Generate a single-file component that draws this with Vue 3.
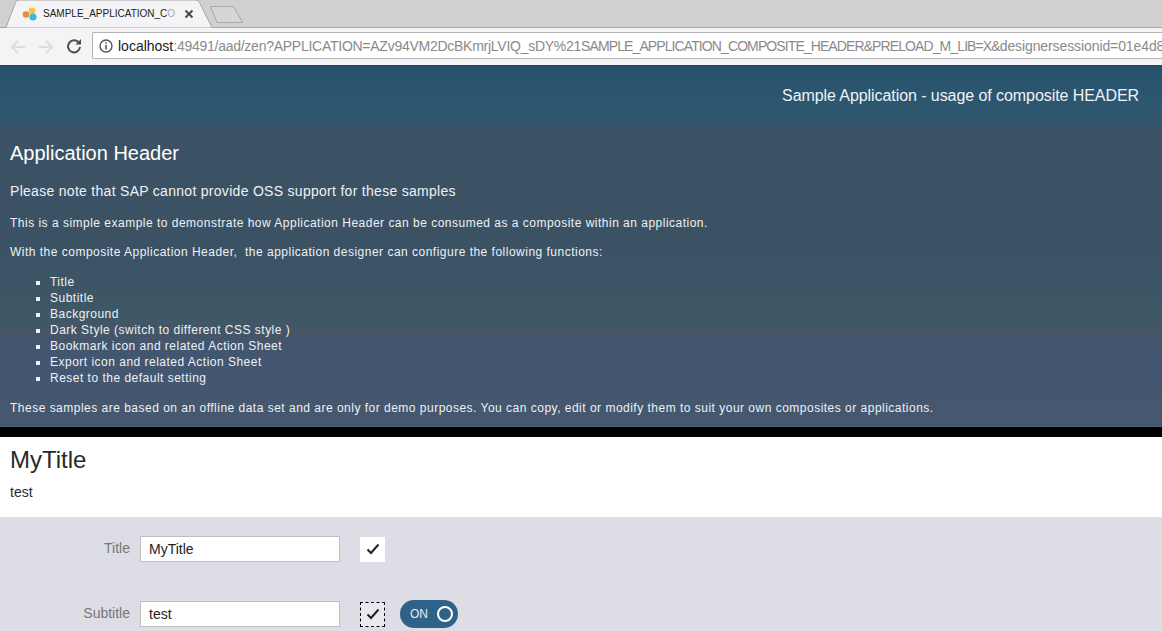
<template>
  <div class="page">
    <div class="tabstrip">
      <div class="tab">
        <svg class="tab-shape" width="226" height="28" viewBox="0 0 226 28"><path d="M0 27.5 H6 L15.5 2.5 Q16.5 0 19 0 H196 Q198.500 0 199.500 2.5 L212 27.5 H226" fill="#f4f3f5" stroke="#a4a5a5" stroke-width="1"/></svg>
        <svg class="favicon" width="16" height="16" viewBox="0 0 16 16"><circle cx="10" cy="4.700" r="3.300" fill="#f5c243"/><circle cx="4" cy="8.500" r="3.300" fill="#ef8a38"/><circle cx="11" cy="11" r="3.600" fill="#35bcd8"/></svg>
        <span class="tab-title">SAMPLE_APPLICATION_C<span class="fade">O</span></span>
        <svg class="tab-close" width="10" height="10" viewBox="0 0 10 10"><path d="M1.500 1.500 L8.500 8.500 M8.500 1.500 L1.500 8.500" stroke="#4a4a4a" stroke-width="2"/></svg>
      </div>
      <svg class="newtab" width="36" height="20" viewBox="0 0 36 20"><path d="M1.500 1.500 H24.500 L33.500 17.500 H8 Z" fill="#d6d7d5" stroke="#a6a7a6"/></svg>
    </div>
    <div class="toolbar">
      <svg class="nav" width="16" height="14" viewBox="0 0 16 14"><path d="M15 7 H2 M8 1 L2 7 L8 13" fill="none" stroke="#dddddf" stroke-width="2"/></svg>
      <svg class="nav" width="16" height="14" viewBox="0 0 16 14"><path d="M1 7 H14 M8 1 L14 7 L8 13" fill="none" stroke="#dddddf" stroke-width="2"/></svg>
      <svg class="reload" width="16" height="16" viewBox="0 0 16 16"><path d="M13 5 A6 6 0 1 0 14 9" fill="none" stroke="#4e4e4e" stroke-width="2"/><path d="M9.500 6.500 H15 V1 Z" fill="#4e4e4e"/></svg>
      <div class="omnibox">
        <svg width="14" height="14" viewBox="0 0 14 14" class="info"><circle cx="7" cy="7" r="6" fill="none" stroke="#555" stroke-width="1.400"/><path d="M7 6 V10.500 M7 3.200 V4.800" stroke="#555" stroke-width="1.600"/></svg>
        <span class="url"><span class="host">localhost</span><span class="seg-a">:49491/aad/zen?APPLICATION=AZv94VM2DcBKmrjLVIQ_sDY%21</span><span class="seg-b">SAMPLE_APPLICATION_COMPOSITE_HEADER&amp;PRELOAD_M_LIB=X&amp;</span><span class="seg-c">designersessionid=01e4d8</span></span>
      </div>
    </div>
    <header class="shell-head">Sample Application - usage of composite HEADER</header>
    <section class="intro">
      <h1>Application Header</h1>
      <p class="note">Please note that SAP cannot provide OSS support for these samples</p>
      <p class="body first">This is a simple example to demonstrate how Application Header can be consumed as a composite within an application.</p>
      <p class="body second">With the composite Application Header,&nbsp; the application designer can configure the following functions:</p>
      <ul>
        <li v-for="item in items" :key="item">{{ item }}</li>
      </ul>
      <p class="body last">These samples are based on an offline data set and are only for demo purposes. You can copy, edit or modify them to suit your own composites or applications.</p>
    </section>
    <div class="blackbar"></div>
    <section class="app-head">
      <div class="app-title">MyTitle</div>
      <div class="app-sub">test</div>
    </section>
    <section class="form">
      <div class="row">
        <label>Title</label>
        <div class="input">MyTitle</div>
        <div class="check"><svg width="14" height="12" viewBox="0 0 14 12"><path d="M1.500 6.500 L5 10 L12.500 1.500" fill="none" stroke="#222" stroke-width="2"/></svg></div>
      </div>
      <div class="row second-row">
        <label>Subtitle</label>
        <div class="input">test</div>
        <div class="check focus"><svg width="14" height="12" viewBox="0 0 14 12"><path d="M1.500 6.500 L5 10 L12.500 1.500" fill="none" stroke="#222" stroke-width="2"/></svg></div>
        <div class="switch"><span>ON</span><i></i></div>
      </div>
    </section>
  </div>
</template>

<script setup>
const items = [
  'Title',
  'Subtitle',
  'Background',
  'Dark Style (switch to different CSS style )',
  'Bookmark icon and related Action Sheet',
  'Export icon and related Action Sheet',
  'Reset to the default setting'
]
</script>

<style>
html, body { margin: 0; overflow: hidden; }
</style>

<style scoped>
.page { width: 1162px; height: 631px; overflow: hidden; font-family: "Liberation Sans", Arial, sans-serif; background: #dddee5; }
.tabstrip { height: 28px; background: #d0d1cf; position: relative; display: flex; box-sizing: border-box; box-shadow: inset 0 -1px 0 #a4a5a5; }
.tab { width: 226px; height: 28px; position: relative; display: flex; align-items: center; flex: none; }
.tab-shape { position: absolute; left: 0; top: 0; }
.favicon { position: relative; margin-left: 22px; flex: none; }
.tab-title { position: relative; top: -1px; font-size: 10px; margin-left: 5px; color: #222; white-space: nowrap; }
.fade { color: #aaa; }
.tab-close { position: relative; margin-left: 9px; flex: none; }
.newtab { margin: 5px 0 0 -17px; }
.toolbar { height: 37px; background: #f4f3f5; display: flex; align-items: center; padding: 0 0 2px 10px; box-sizing: border-box; }
.nav { margin-right: 12px; margin-top: 2px; flex: none; }
.reload { flex: none; }
.omnibox { margin-left: 10px; flex: 1; height: 27px; min-width: 0; background: #fff; border: 1px solid #b5b5b5; border-right: 0; border-radius: 2px 0 0 2px; display: flex; align-items: center; overflow: hidden; box-sizing: border-box; }
.info { margin-left: 6px; flex: none; }
.url { margin-left: 5px; font-size: 14px; color: #8a8a8a; white-space: nowrap; }
.host { color: #222; }
.seg-a { letter-spacing: -.26px; }
.seg-b { letter-spacing: -.9px; }
.seg-c { letter-spacing: -.1px; }
.shell-head { height: 60px; box-sizing: border-box; padding: 21px 23px 0 0; text-align: right; color: #eef3f5; font-size: 16px; line-height: 19px; letter-spacing: -.07px; background: linear-gradient(#1f4a64 0, #26516c 3px, #2c5670 50%, #31566e); }
.intro { height: 302px; box-sizing: border-box; padding: 17px 10px 0; color: #eef1f3; background: linear-gradient(#3b5266 0, #3b5265 40%, #3e5866 64%, #465566 68%, #43566f 73%, #45586f 99.600%, #56677c 100%); }
h1 { margin: 0; font-size: 20px; line-height: 23px; font-weight: 400; color: #fff; }
.note { margin: 18px 0 0; font-size: 14px; line-height: 16px; letter-spacing: .29px; }
.body { margin: 0; font-size: 12px; line-height: 14px; letter-spacing: .49px; }
.first { margin-top: 17px; }
.second { margin-top: 15px; }
ul { margin: 15px 0 0; padding: 0 0 0 40px; font-size: 12px; line-height: 16px; letter-spacing: .49px; list-style-type: square; }
.last { margin-top: 15px; }
.blackbar { height: 10px; background: #000; }
.app-head { height: 80px; background: #fff; box-sizing: border-box; padding: 9px 10px 0; color: #2a2a2a; }
.app-title { font-size: 24px; line-height: 27px; }
.app-sub { margin-top: 11px; font-size: 14px; line-height: 16px; }
.form { padding-top: 19px; }
.row { display: flex; align-items: center; height: 26px; }
.second-row { margin-top: 39px; }
label { width: 130px; position: relative; top: -1px; text-align: right; font-size: 14px; color: #777; flex: none; }
.input { margin-left: 10px; width: 200px; height: 26px; box-sizing: border-box; background: #fff; border: 1px solid #bfbfbf; padding-left: 8px; font-size: 14px; line-height: 25px; color: #222; flex: none; }
.check { margin-left: 20px; width: 25px; height: 25px; background: #fff; box-sizing: border-box; display: flex; align-items: center; justify-content: center; flex: none; }
.check.focus { border: 1px dashed #000; background: #e9e9ef; }
.switch { margin-left: 15px; width: 58px; height: 28px; border-radius: 14px; background: #2f6288; color: #e8eef3; font-size: 12px; display: flex; align-items: center; box-sizing: border-box; padding-left: 10px; position: relative; }
.switch i { position: absolute; right: 5px; top: 6px; width: 16px; height: 16px; box-sizing: border-box; border: 2.5px solid #fff; border-radius: 50%; }
</style>
